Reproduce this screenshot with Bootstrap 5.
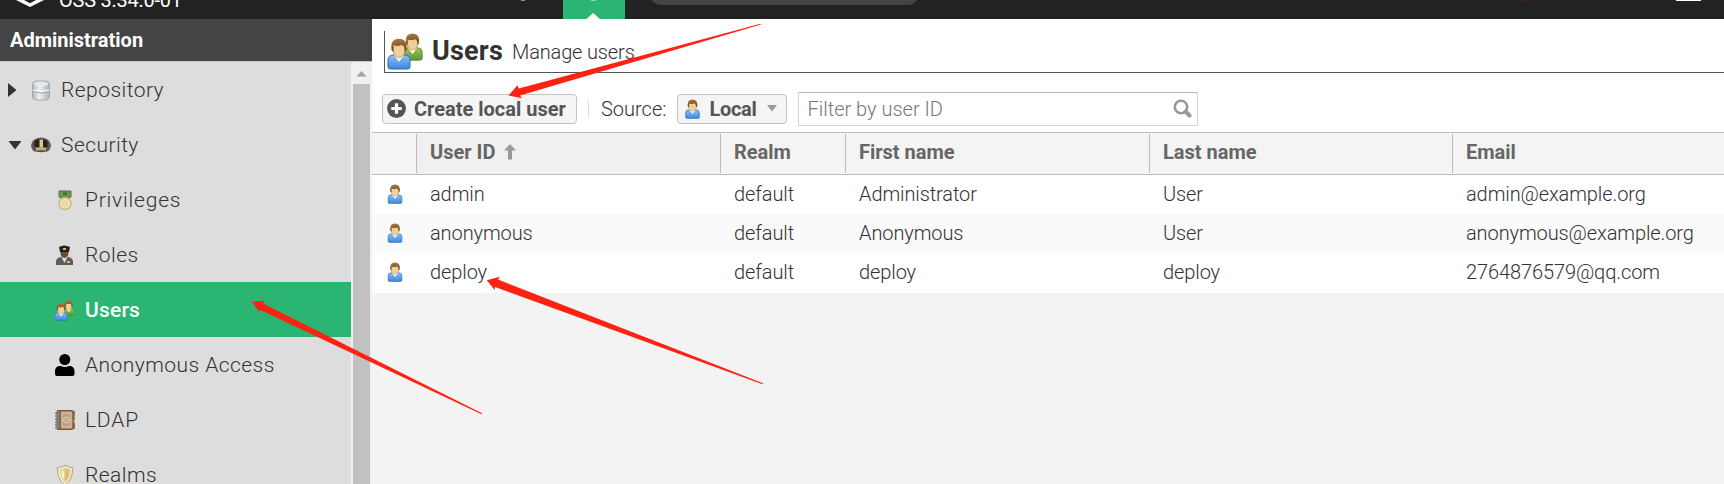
<!DOCTYPE html>
<html lang="en">
<head>
<meta charset="utf-8">
<title>Users</title>
<link href="https://cdn.jsdelivr.net/npm/bootstrap@5.3.0/dist/css/bootstrap.min.css" rel="stylesheet">
<style>
body{font-family:Roboto,"Liberation Sans",sans-serif;font-size:20px;font-weight:300;color:#333;background:#f3f3f3;height:484px;overflow:hidden;position:relative;line-height:24px}
svg{display:block;flex:none}
.topbar{height:19px;background:#222;overflow:hidden;position:relative}
.topbar svg{width:1724px;height:19px}
.version{position:absolute;left:59px;top:-12px;color:#fff;white-space:nowrap;font-weight:400;font-size:20px;letter-spacing:-.25px}
.sidebar{width:372px;height:465px;flex:none}
.side-title{height:42px;background:#444;color:#fff;font-weight:700;padding-left:10px;font-size:20px}
.tree{width:351px;background:#ddd;border-top:1px solid #c8c8c8;height:423px;overflow:hidden;font-size:21px;letter-spacing:.45px}
.node{height:55px;white-space:nowrap;padding-left:8px}
.node .toggle{width:13px;margin-right:10px}
.node .ico{width:22px;margin-right:8px}
.leaf{padding-left:54px}
.leaf .ico{margin-right:9px}
.leaf.active{background:#2ab573;color:#fff;font-weight:500;letter-spacing:.2px}
.wide{letter-spacing:.8px}
.scrollbar{width:21px;background:#f1f1f1;border-top:1px solid #c8c8c8;padding:9px 2px 0}
.scrollbar svg{margin-left:3px}
.thumb{background:#c1c1c1;width:17px;height:401px;margin-top:7px}
.main{min-width:0}
.top-panel{background:#fff;height:113px;padding-top:12px}
.heading{margin-left:12px;border-left:1px solid #555;border-bottom:1px solid #555;height:42px;padding-left:2px;white-space:nowrap}
.heading h1{font-size:27px;font-weight:700;margin:-2px 0 0 9px;line-height:30px;letter-spacing:.2px}
.heading .sub{margin-left:9px;letter-spacing:-.15px}
.tool{height:30px;border:1px solid #c2c2c2;border-radius:4px;background:#f5f5f5;color:#555;font-weight:700;font-size:20px;padding:0 0 1px;white-space:nowrap}
.tool-create{width:195px}
.tool-source{width:110px;margin-left:11px;letter-spacing:-.3px}
.tool-source svg:first-child{margin:0 9px 0 7px}
.tools{padding-left:10px;padding-top:19px}
.sep{width:1px;height:17px;background:#ddd;margin-left:11px;margin-right:12px}
.filter{width:400px;height:34px;border:1px solid #d4d4d4;border-top-color:#bbb;background:#fff;color:#777;padding:0 5px 1px 8px;margin-left:11px}
.grid-users{table-layout:fixed;width:1352px;margin:0;border-collapse:separate;border-spacing:0;color:#333;letter-spacing:-.1px}
.grid-users th{height:43px;padding:0 0 3px 13px;border-top:1px solid #bbb;border-bottom:1px solid #bbb;background:linear-gradient(#bbb,#bbb) right 1px/1px 39px no-repeat #f4f4f4;font-weight:700;color:#666;vertical-align:middle;line-height:24px;letter-spacing:0}
.grid-users th.sorted{background-color:#f0f0f0}
.grid-users th:last-child{background-image:none}
.grid-users td{height:39px;padding:0 0 1px 13px;border:0;background:#fff;vertical-align:middle;white-space:nowrap;line-height:24px}
.grid-users td:first-child{padding-left:15px}
.grid-users tr:nth-child(2) td{background:#fafafa}
.grid-users tr:last-child td{height:40px;padding-bottom:2px}
.arrows{position:absolute;left:0;top:0;pointer-events:none}
</style>
</head>
<body>
<svg width="0" height="0" style="position:absolute">
<defs>
<linearGradient id="blue" x1="0" y1="0" x2="0" y2="1"><stop offset="0" stop-color="#8fc0f5"/><stop offset="1" stop-color="#3d86dc"/></linearGradient>
<linearGradient id="green" x1="0" y1="0" x2="0" y2="1"><stop offset="0" stop-color="#9bc45b"/><stop offset="1" stop-color="#5f9630"/></linearGradient>
<linearGradient id="hair" x1="0" y1="0" x2="0" y2="1"><stop offset="0" stop-color="#a9793d"/><stop offset="1" stop-color="#6e4218"/></linearGradient>
<linearGradient id="silver"><stop offset="0" stop-color="#aeb4b9"/><stop offset=".4" stop-color="#eef1f3"/><stop offset="1" stop-color="#aab0b5"/></linearGradient>
<symbol id="man" viewBox="0 0 24 32">
<path d="M1 29V22q0-5 6-5h10q6 0 6 5v7q0 2-3 2H4q-3 0-3-2z" fill="url(#blue)" stroke="#2b6cbc"/>
<path d="M7 17h10l-5 7z" fill="#fff"/>
<ellipse cx="12" cy="12" rx="6" ry="7.500" fill="#f0cf98" stroke="#b98a50" stroke-width=".7"/>
<path d="M4.500 12Q3 1 12 .7 21 1 19.500 12l-2 2q1-6-3-7-4 2-8 0l0 7z" fill="url(#hair)"/>
</symbol>
<symbol id="man2" viewBox="0 0 24 32">
<path d="M1 29V22q0-5 6-5h10q6 0 6 5v7q0 2-3 2H4q-3 0-3-2z" fill="url(#green)" stroke="#4d7f25"/>
<path d="M7 17h10l-5 7z" fill="#fff"/>
<ellipse cx="12" cy="12" rx="6" ry="7.500" fill="#f0cf98" stroke="#b98a50" stroke-width=".7"/>
<path d="M4.500 12Q3 1 12 .7 21 1 19.500 12l-2 2q1-6-3-7-4 2-8 0l0 7z" fill="url(#hair)"/>
</symbol>
<symbol id="pair" viewBox="0 0 36 37"><use href="#man2" x="15" y="0" width="21" height="28"/><use href="#man" x="0" y="5" width="24" height="32"/></symbol>
</defs>
</svg>

<header class="topbar">
<svg viewBox="0 0 1724 19">
<path d="M16 0H24L30 3.200 36 0H44L30 7z" fill="#fff"/>
<path d="M521 0h4v.8h-4z" fill="#aaa"/>
<path d="M563 0h62v19h-62z" fill="#2ab573"/><path d="M586.500 19l6.700-6 6.700 6z" fill="#fff"/><path d="M591 0h5v.8h-5z" fill="#b5dcc8"/>
<path d="M648-8q3 13 14 13h246q9 0 12-13z" fill="#444"/>
<path d="M1521 0h5v1h-5z" fill="#5a1a24"/><path d="M1676 0h25v1h-25z" fill="#fff"/>
</svg>
<span class="version">OSS 3.34.0-01</span>
</header>

<div class="d-flex">
<aside class="sidebar">
<div class="side-title d-flex align-items-center"><span>Administration</span></div>
<div class="d-flex">
<nav class="tree">
<div class="node d-flex align-items-center"><svg class="toggle" height="14" viewBox="0 0 13 14"><path d="M0 0l8.500 7L0 14z" fill="#333"/></svg><svg class="ico" height="22" viewBox="0 0 22 22"><rect x="1.500" y="2" width="17" height="19" rx="4" fill="url(#silver)" stroke="#a4a9ae"/><ellipse cx="10" cy="5" rx="7.500" ry="2.300" fill="#e6e9eb"/><path d="M2 11q8 3 16 0" stroke="#f8f8f8" stroke-width="1.500" fill="none"/><path d="M2 12.500q8 3 16 0" stroke="#9ba1a6" fill="none"/></svg><span>Repository</span></div>
<div class="node d-flex align-items-center"><svg class="toggle" height="14" viewBox="0 0 13 14"><path d="M.5 3h13l-6.500 8.500z" fill="#333"/></svg><svg class="ico" height="22" viewBox="0 0 22 22"><path d="M0 11.500Q1 4 10 3.500 19 4 20 11.500q-1 5.500-4 6-6 1.500-12 0-3-.5-4-6z" fill="#5d574c"/><path d="M3.500 7q6.500-4 13 0v6h-13z" fill="#242321"/><path d="M8.500 5.500h3.500v8H8.500z" fill="#dccb88"/><path d="M5 14q5-1.500 10 0v2.500q-5-1-10 0z" fill="#c3b080"/></svg><span>Security</span></div>
<div class="node leaf d-flex align-items-center"><svg class="ico" height="22" viewBox="0 0 22 22"><path d="M5 2h12v6q-6 3-12 0z" fill="#6d9852" stroke="#4c7a3c"/><path d="M9 2.500h4v4H9z" fill="#47763a"/><circle cx="11" cy="14.500" r="6" fill="#f3e6bb" stroke="#cdb078" stroke-width="1.300"/><circle cx="11" cy="14.500" r="3.600" fill="#ead8a0"/></svg><span class="wide">Privileges</span></div>
<div class="node leaf d-flex align-items-center"><svg class="ico" height="22" viewBox="0 0 22 22"><path d="M2 21v-4q1-4 6-4h5q5 0 6 4v4z" fill="#5c5c60"/><path d="M7 12h7l-3.500 7z" fill="#ddd"/><ellipse cx="10.500" cy="9" rx="4" ry="5" fill="#6c4a3a"/><path d="M5 3q5-3 11 0l-1 5H6z" fill="#222"/><path d="M9 4h3v2H9zM13 17h3v2h-3z" fill="#d8b958"/></svg><span>Roles</span></div>
<div class="node leaf active d-flex align-items-center"><svg class="ico" height="22" viewBox="0 0 22 22"><use href="#pair" x="0" y="1" width="21" height="21"/></svg><span>Users</span></div>
<div class="node leaf d-flex align-items-center"><svg class="ico" height="24" viewBox="0 0 22 24"><circle cx="10.800" cy="6.500" r="5.500" fill="#000"/><path d="M1 21v-2.500Q1 13 6 13h.8q4 2 8 0h.7q5 0 5 5.500V21q0 2-2 2H3q-2 0-2-2z" fill="#000"/></svg><span>Anonymous Access</span></div>
<div class="node leaf d-flex align-items-center"><svg class="ico" height="22" viewBox="0 0 22 22"><path d="M18 2h3v18h-3z" fill="#9a6b4c"/><path d="M19 5h2v6h-2z" fill="#7d9c50"/><path d="M19 11h2v3h-2z" fill="#e0aa50"/><rect x="3" y="1.500" width="16" height="19" rx="1" fill="#a98b6c" stroke="#765336"/><rect x="8" y="4" width="9" height="14" fill="#ba9f81" stroke="#e0cfb7"/><circle cx="12.500" cy="11" r="3" fill="none" stroke="#e0cfb7"/><circle cx="12.500" cy="11" r="1" fill="#e0cfb7"/><path d="M6 2v18" stroke="#6b4930"/><path d="M1 4h4M1 7h4M1 10h4M1 13h4M1 16h4M1 19h4" stroke="#777" stroke-width="1.300"/></svg><span class="wide">LDAP</span></div>
<div class="node leaf d-flex align-items-center"><svg class="ico" height="22" viewBox="0 0 22 22"><path d="M11 1.500q4 2 7.500 2 .8 12-7.500 17.500Q2.700 15.500 3.500 3.500q3.500 0 7.500-2z" fill="#f3e9c4" stroke="#b7a67b"/><path d="M11 4q2.500 1.300 5 1.500.2 8.500-5 12.500z" fill="#d9c179"/><path d="M11 4q-2.500 1.300-5 1.500-.2 8.500 5 12.500z" fill="#e5d59c"/><path d="M9 7v7" stroke="#fff8de" stroke-width="1.500"/></svg><span>Realms</span></div>
</nav>
<div class="scrollbar"><svg width="11" height="6" viewBox="0 0 11 6"><path d="M.5 5.500L5.500 0l5 5.500z" fill="#a3a3a3"/></svg><div class="thumb"></div></div>
</div>
</aside>

<main class="main flex-grow-1">
<div class="top-panel">
<div class="heading d-flex align-items-center"><svg width="36" height="37"><use href="#pair" width="36" height="37"/></svg><h1>Users</h1><span class="sub">Manage users</span></div>
<div class="tools d-flex align-items-center">
<button class="tool tool-create d-flex align-items-center"><svg class="ms-1 me-2" width="19" height="19" viewBox="0 0 20 20"><circle cx="10" cy="10" r="9.900" fill="#555"/><path d="M10 4.500v11M4.500 10h11" stroke="#fff" stroke-width="3.400"/></svg><span>Create local user</span></button>
<div class="sep"></div><span>Source:</span>
<button class="tool tool-source d-flex align-items-center"><svg width="15" height="20"><use href="#man" width="15" height="20"/></svg><span>Local</span><svg class="ms-auto me-2" width="12" height="7" viewBox="0 0 12 7"><path d="M1 0h10L6 6.500z" fill="#999"/></svg></button>
<div class="filter d-flex align-items-center justify-content-between"><span>Filter by user ID</span><svg width="19" height="19" viewBox="0 0 19 19"><circle cx="8" cy="8" r="6.200" fill="none" stroke="#999" stroke-width="2.600"/><path d="M12.500 12.500l4 4" stroke="#999" stroke-width="4" stroke-linecap="round"/></svg></div>
</div>
</div>
<table class="table grid-users">
<colgroup><col style="width:45px"><col style="width:304px"><col style="width:125px"><col style="width:304px"><col style="width:303px"><col></colgroup>
<thead><tr><th></th><th class="sorted"><div class="d-flex align-items-center"><span>User ID</span><svg class="ms-2 me-0" width="14" height="16" viewBox="2 0 14 16"><path d="M7 0l6 6.500H9V15.500H5V6.500H1z" transform="translate(2)" fill="#999"/></svg></div></th><th>Realm</th><th>First name</th><th>Last name</th><th>Email</th></tr></thead>
<tbody>
<tr><td><svg width="16" height="20"><use href="#man" width="16" height="20"/></svg></td><td>admin</td><td>default</td><td>Administrator</td><td>User</td><td>admin@example.org</td></tr>
<tr><td><svg width="16" height="20"><use href="#man" width="16" height="20"/></svg></td><td>anonymous</td><td>default</td><td>Anonymous</td><td>User</td><td>anonymous@example.org</td></tr>
<tr><td><svg width="16" height="20"><use href="#man" width="16" height="20"/></svg></td><td>deploy</td><td>default</td><td>deploy</td><td>deploy</td><td>2764876579@qq.com</td></tr>
</tbody>
</table>
</main>
</div>
<svg class="arrows" width="1724" height="484" viewBox="0 0 1724 484" fill="#ff2212">
<path d="M508.500 95.500L517.500 85.300 518.700 88.500 760.500 23.800 761 24.600 520 95.500 522 98.300z"/>
<path d="M486.700 280.300L500 276.700 498 279.500 763 383.300 762.500 384.200 495 287 494.700 290z"/>
<path d="M251.700 301.700L264.700 300.700 263 303.500 482 413.300 481.500 414.200 259.700 309.700 259.700 312.700z"/>
</svg>
<script src="https://cdn.jsdelivr.net/npm/bootstrap@5.3.0/dist/js/bootstrap.bundle.min.js"></script>
</body>
</html>
